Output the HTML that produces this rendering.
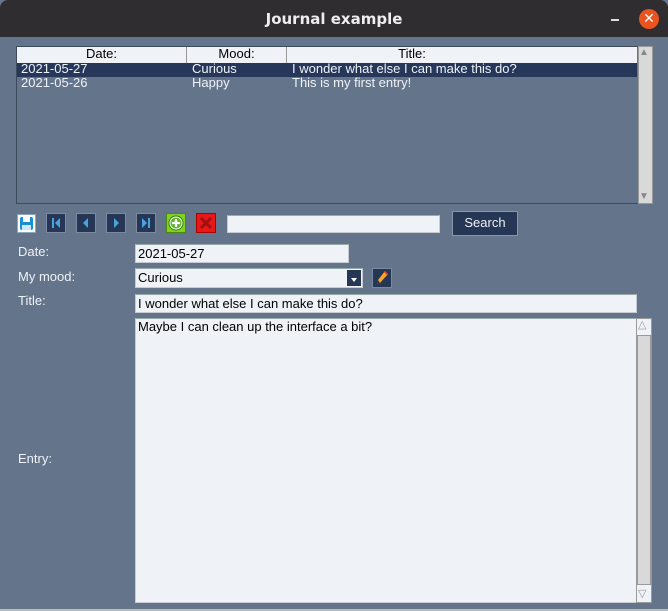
<!DOCTYPE html>
<html><head><meta charset="utf-8"><style>
*{margin:0;padding:0;box-sizing:border-box}
body{width:668px;height:611px;overflow:hidden;background:#64758b;font-family:"Liberation Sans",sans-serif;font-size:13px;position:relative}
.a{position:absolute}
.tb{left:0;top:0;width:668px;height:37px;background:#2f2d2f;border-radius:8px 8px 0 0;color:#eee;text-align:center;font-weight:bold;font-size:15px;line-height:38px;font-family:"DejaVu Sans",sans-serif}
.ent{background:#eff3f8;border:1px solid #c8ccd2;border-top-color:#9aa;color:#000;padding-left:2px;line-height:17px}
.lbl{color:#eef2f7;left:18px}
.btn{background:#263755;border:1px solid #7b8aa0;width:20px;height:20px}
.sb{background:#d9d9d9;border:1px solid #999}
</style></head><body>
<div class="a tb">Journal example</div>
<div class="a" style="left:611px;top:19px;width:8px;height:1.5px;background:#ddd"></div>
<div class="a" style="left:639px;top:9px;width:20px;height:20px;border-radius:50%;background:#e95420;color:#fff;text-align:center;line-height:19px;font-size:14px">✕</div>
<div class="a" style="left:16px;top:46px;width:637px;height:158px;border:1px solid #3d4a5c;border-right:none"></div>
<div class="a" style="left:17px;top:47px;width:620px;height:16px;background:#eff3f8;color:#000;line-height:14px">
<span class="a" style="left:0;width:170px;text-align:center;border-right:1px solid #999;height:16px">Date:</span>
<span class="a" style="left:170px;width:100px;text-align:center;border-right:1px solid #999;height:16px">Mood:</span>
<span class="a" style="left:270px;width:250px;text-align:center">Title:</span></div>
<div class="a" style="left:17px;top:63px;width:620px;height:14px;background:#27375a"></div>
<div class="a" style="left:21px;top:62px;color:#eef2f7;line-height:14px">2021-05-27</div>
<div class="a" style="left:192px;top:62px;color:#eef2f7;line-height:14px">Curious</div>
<div class="a" style="left:292px;top:62px;color:#eef2f7;line-height:14px">I wonder what else I can make this do?</div>
<div class="a" style="left:21px;top:76px;color:#eef2f7;line-height:14px">2021-05-26</div>
<div class="a" style="left:192px;top:76px;color:#eef2f7;line-height:14px">Happy</div>
<div class="a" style="left:292px;top:76px;color:#eef2f7;line-height:14px">This is my first entry!</div>
<div class="a sb" style="left:638px;top:46px;width:15px;height:158px"></div>
<div class="a" style="left:639px;top:47px;color:#888;font-size:10px">▲</div>
<div class="a" style="left:639px;top:191px;color:#888;font-size:10px">▼</div>
<!-- toolbar -->
<div class="a" style="left:17px;top:214px;width:19px;height:19px;background:#fff;border:1px solid #8ab"><div class="a" style="left:2px;top:2px;width:13px;height:13px;background:#1a8fd0;border-radius:2px"></div><div class="a" style="left:5px;top:2px;width:7px;height:5px;background:#fff"></div><div class="a" style="left:4px;top:10px;width:9px;height:5px;background:#cfe8f7"></div></div>
<div class="a btn" style="left:46px;top:213px"><svg width="18" height="18"><rect x="5" y="4" width="2" height="10" fill="#4aa3e0"/><path d="M13 4L8 9L13 14Z" fill="#4aa3e0"/></svg></div>
<div class="a btn" style="left:76px;top:213px"><svg width="18" height="18"><path d="M11 4L6 9L11 14Z" fill="#4aa3e0"/></svg></div>
<div class="a btn" style="left:106px;top:213px"><svg width="18" height="18"><path d="M7 4L12 9L7 14Z" fill="#4aa3e0"/></svg></div>
<div class="a btn" style="left:136px;top:213px"><svg width="18" height="18"><path d="M5 4L10 9L5 14Z" fill="#4aa3e0"/><rect x="11" y="4" width="2" height="10" fill="#4aa3e0"/></svg></div>
<div class="a" style="left:166px;top:213px;width:20px;height:20px;background:#7ed321;border:1px solid #4a8a10"><svg width="18" height="18"><circle cx="9" cy="9" r="7" fill="#fff" stroke="#3a7a10"/><circle cx="9" cy="9" r="5.5" fill="#5cb82a"/><path d="M9 5V13M5 9H13" stroke="#fff" stroke-width="2.2"/></svg></div>
<div class="a" style="left:196px;top:213px;width:20px;height:20px;background:#e81818;border:1px solid #a00"><svg width="18" height="18"><path d="M4 4L14 14M14 4L4 14" stroke="#a01010" stroke-width="3"/></svg></div>
<div class="a ent" style="left:227px;top:215px;width:213px;height:18px"></div>
<div class="a" style="left:452px;top:211px;width:66px;height:25px;background:#263755;border:1px solid #8a96a8;color:#eef2f7;text-align:center;line-height:22px">Search</div>
<!-- form -->
<div class="a lbl" style="top:244px">Date:</div>
<div class="a ent" style="left:135px;top:244px;width:214px;height:19px">2021-05-27</div>
<div class="a lbl" style="top:269px">My mood:</div>
<div class="a ent" style="left:135px;top:268px;width:228px;height:20px">Curious</div>
<div class="a" style="left:347px;top:270px;width:14px;height:16px;background:#263755"><div class="a" style="left:4px;top:8px;width:0;height:0;border:3px solid transparent;border-top:4px solid #fff"></div></div>
<div class="a btn" style="left:372px;top:268px;width:20px;height:20px"><svg width="18" height="18"><path d="M12 2L15 5L7 14L4 15L5 11Z" fill="#f5a623"/><path d="M12 2L15 5L14 6L11 3Z" fill="#e33"/><path d="M4 15L5 11L7 14Z" fill="#333"/></svg></div>
<div class="a lbl" style="top:293px">Title:</div>
<div class="a ent" style="left:135px;top:294px;width:502px;height:19px">I wonder what else I can make this do?</div>
<div class="a ent" style="left:135px;top:318px;width:502px;height:285px;line-height:15px;padding-top:0">Maybe I can clean up the interface a bit?</div>
<div class="a sb" style="left:636px;top:318px;width:16px;height:285px;background:#eff3f8"><div class="a" style="left:0;top:16px;width:14px;height:250px;background:#d9d9d9;border:1px solid #999"></div></div>
<div class="a" style="left:638px;top:318px;color:#999;font-size:11px">△</div>
<div class="a" style="left:638px;top:587px;color:#999;font-size:11px">▽</div>
<div class="a lbl" style="top:451px">Entry:</div>
<div class="a" style="left:0;top:609px;width:668px;height:2px;background:#bbb"></div>
</body></html>
